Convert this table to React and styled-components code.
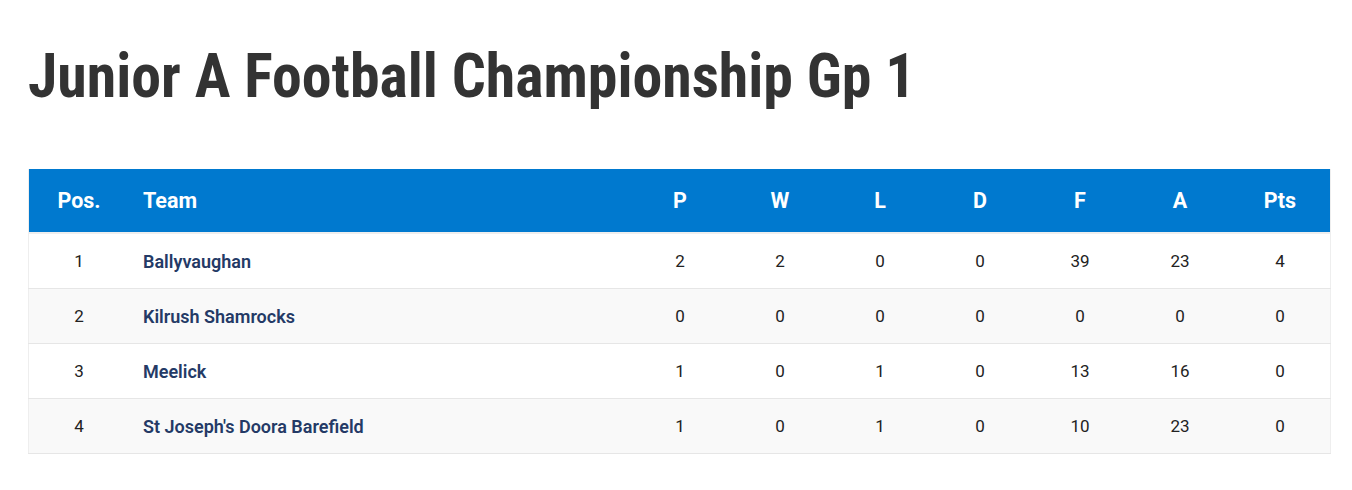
import React from "react";
import styled, { createGlobalStyle } from "styled-components";

const Global = createGlobalStyle`
  html, body { margin: 0; padding: 0; background: #fff; }
  body { font-family: Roboto, "Liberation Sans", sans-serif; }
`;

const Page = styled.div`
  padding: 28px 21px 36px 28px;
`;

const Title = styled.h1`
  margin: 0 0 45px 0;
  font-family: "Roboto Condensed", Roboto, sans-serif;
  font-weight: 700;
  font-size: 62px;
  line-height: 96px;
  color: #333;
  letter-spacing: 0;
`;

const TitleInner = styled.span`
  display: inline-block;
  transform: scaleX(0.965);
  transform-origin: left center;
`;

const Table = styled.table`
  width: 1303px;
  border-collapse: collapse;
  table-layout: fixed;
  border-left: 1px solid #eee;
  border-right: 1px solid #eee;
`;

const HeadRow = styled.tr`
  background: #0079cf;
  border-bottom: 2px solid #eee;
`;

const Th = styled.th`
  height: 63px;
  padding: 0 ${(p) => (p.$left ? "14px" : "0")};
  color: #fff;
  font-weight: 700;
  font-size: 21.5px;
  text-align: ${(p) => (p.$left ? "left" : "center")};
  width: ${(p) => p.$w || "auto"};
`;

const Row = styled.tr`
  background: ${(p) => (p.$alt ? "#f9f9f9" : "#fff")};
  border-bottom: 1px solid #e6e6e6;
`;

const Td = styled.td`
  height: 54px;
  padding: 0 ${(p) => (p.$left ? "14px" : "0")};
  font-size: 17px;
  color: #222;
  text-align: ${(p) => (p.$left ? "left" : "center")};
`;

const TeamName = styled.a`
  color: #243a66;
  font-weight: 600;
  font-size: 18px;
  text-decoration: none;
`;

const rows = [
  [1, "Ballyvaughan", 2, 2, 0, 0, 39, 23, 4],
  [2, "Kilrush Shamrocks", 0, 0, 0, 0, 0, 0, 0],
  [3, "Meelick", 1, 0, 1, 0, 13, 16, 0],
  [4, "St Joseph's Doora Barefield", 1, 0, 1, 0, 10, 23, 0],
];

const cols = ["P", "W", "L", "D", "F", "A", "Pts"];

export default function App() {
  return (
    <>
      <Global />
      <Page>
        <Title>
          <TitleInner>Junior A Football Championship Gp 1</TitleInner>
        </Title>
        <Table>
          <thead>
            <HeadRow>
              <Th $w="100px">Pos.</Th>
              <Th $left>Team</Th>
              {cols.map((c) => (
                <Th key={c} $w="100px">
                  {c}
                </Th>
              ))}
            </HeadRow>
          </thead>
          <tbody>
            {rows.map((r, i) => (
              <Row key={r[0]} $alt={i % 2 === 1}>
                <Td>{r[0]}</Td>
                <Td $left>
                  <TeamName href="#">{r[1]}</TeamName>
                </Td>
                {r.slice(2).map((v, j) => (
                  <Td key={j}>{v}</Td>
                ))}
              </Row>
            ))}
          </tbody>
        </Table>
      </Page>
    </>
  );
}
